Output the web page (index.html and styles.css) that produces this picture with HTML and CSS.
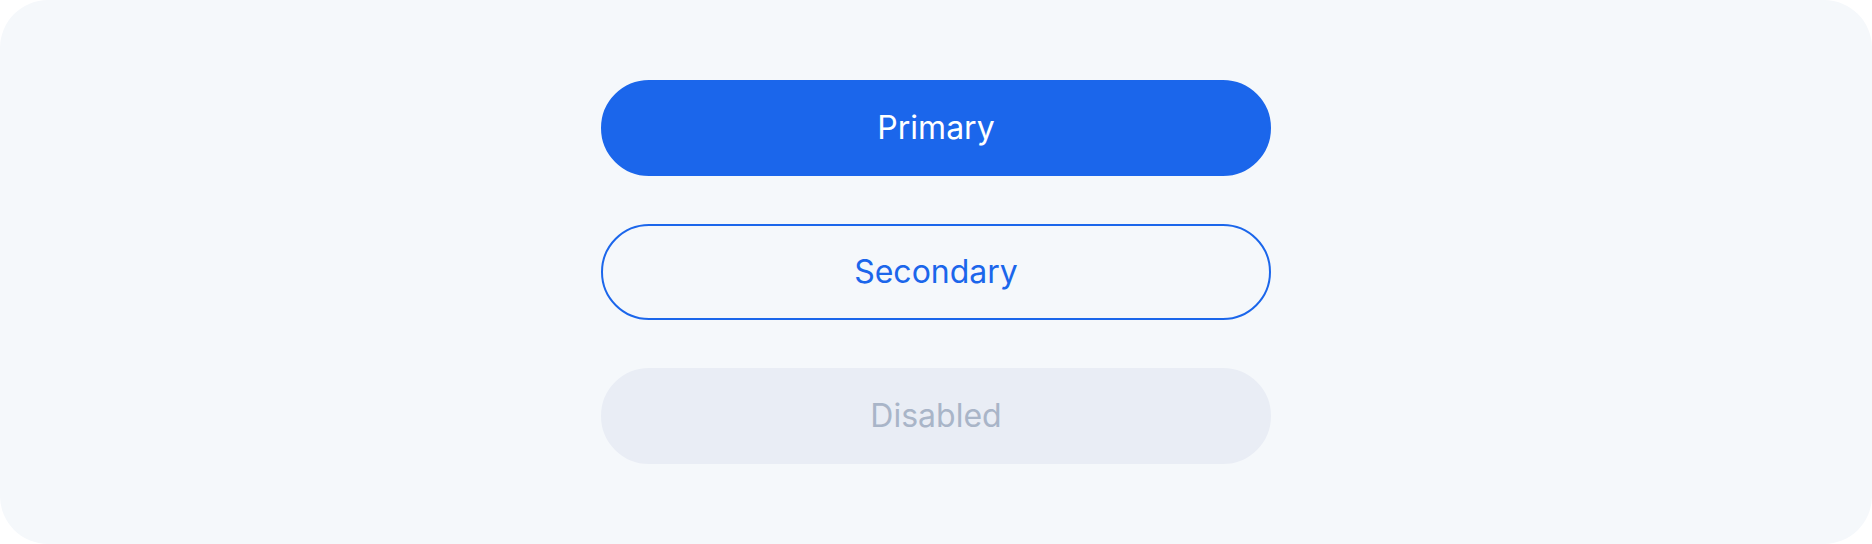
FILE: index.html
```html
<!DOCTYPE html>
<html lang="en">
<head>
<meta charset="utf-8">
<title>Buttons</title>
<link rel="stylesheet" href="styles.css">
</head>
<body>
<main class="frame">
  <div class="btn btn-primary" role="button">Primary</div>
  <div class="btn btn-secondary" role="button">Secondary</div>
  <div class="btn btn-disabled" role="button" aria-disabled="true">Disabled</div>
</main>
</body>
</html>
```
FILE: styles.css
```css
html, body {
  margin: 0;
  padding: 0;
  background: #ffffff;
}
.frame {
  box-sizing: border-box;
  width: 1872px;
  height: 544px;
  background: #f5f8fb;
  border-radius: 48px;
  padding: 80px 0;
  display: flex;
  flex-direction: column;
  align-items: center;
  gap: 48px;
}
.btn {
  box-sizing: border-box;
  width: 670px;
  height: 96px;
  border-radius: 9999px;
  border: 2px solid transparent;
  font-family: Inter, "Noto Sans", sans-serif;
  font-size: 32px;
  font-weight: 400;
  line-height: 1;
  display: flex;
  align-items: center;
  justify-content: center;
  cursor: pointer;
  user-select: none;
}
.btn-primary {
  background: #1b66eb;
  border-color: #1b66eb;
  color: #ffffff;
}
.btn-secondary {
  background: transparent;
  border-color: #1b66eb;
  color: #1b66eb;
}
.btn-disabled {
  background: #e9edf5;
  border-color: #e9edf5;
  color: #a9b5c8;
  cursor: not-allowed;
}
```
